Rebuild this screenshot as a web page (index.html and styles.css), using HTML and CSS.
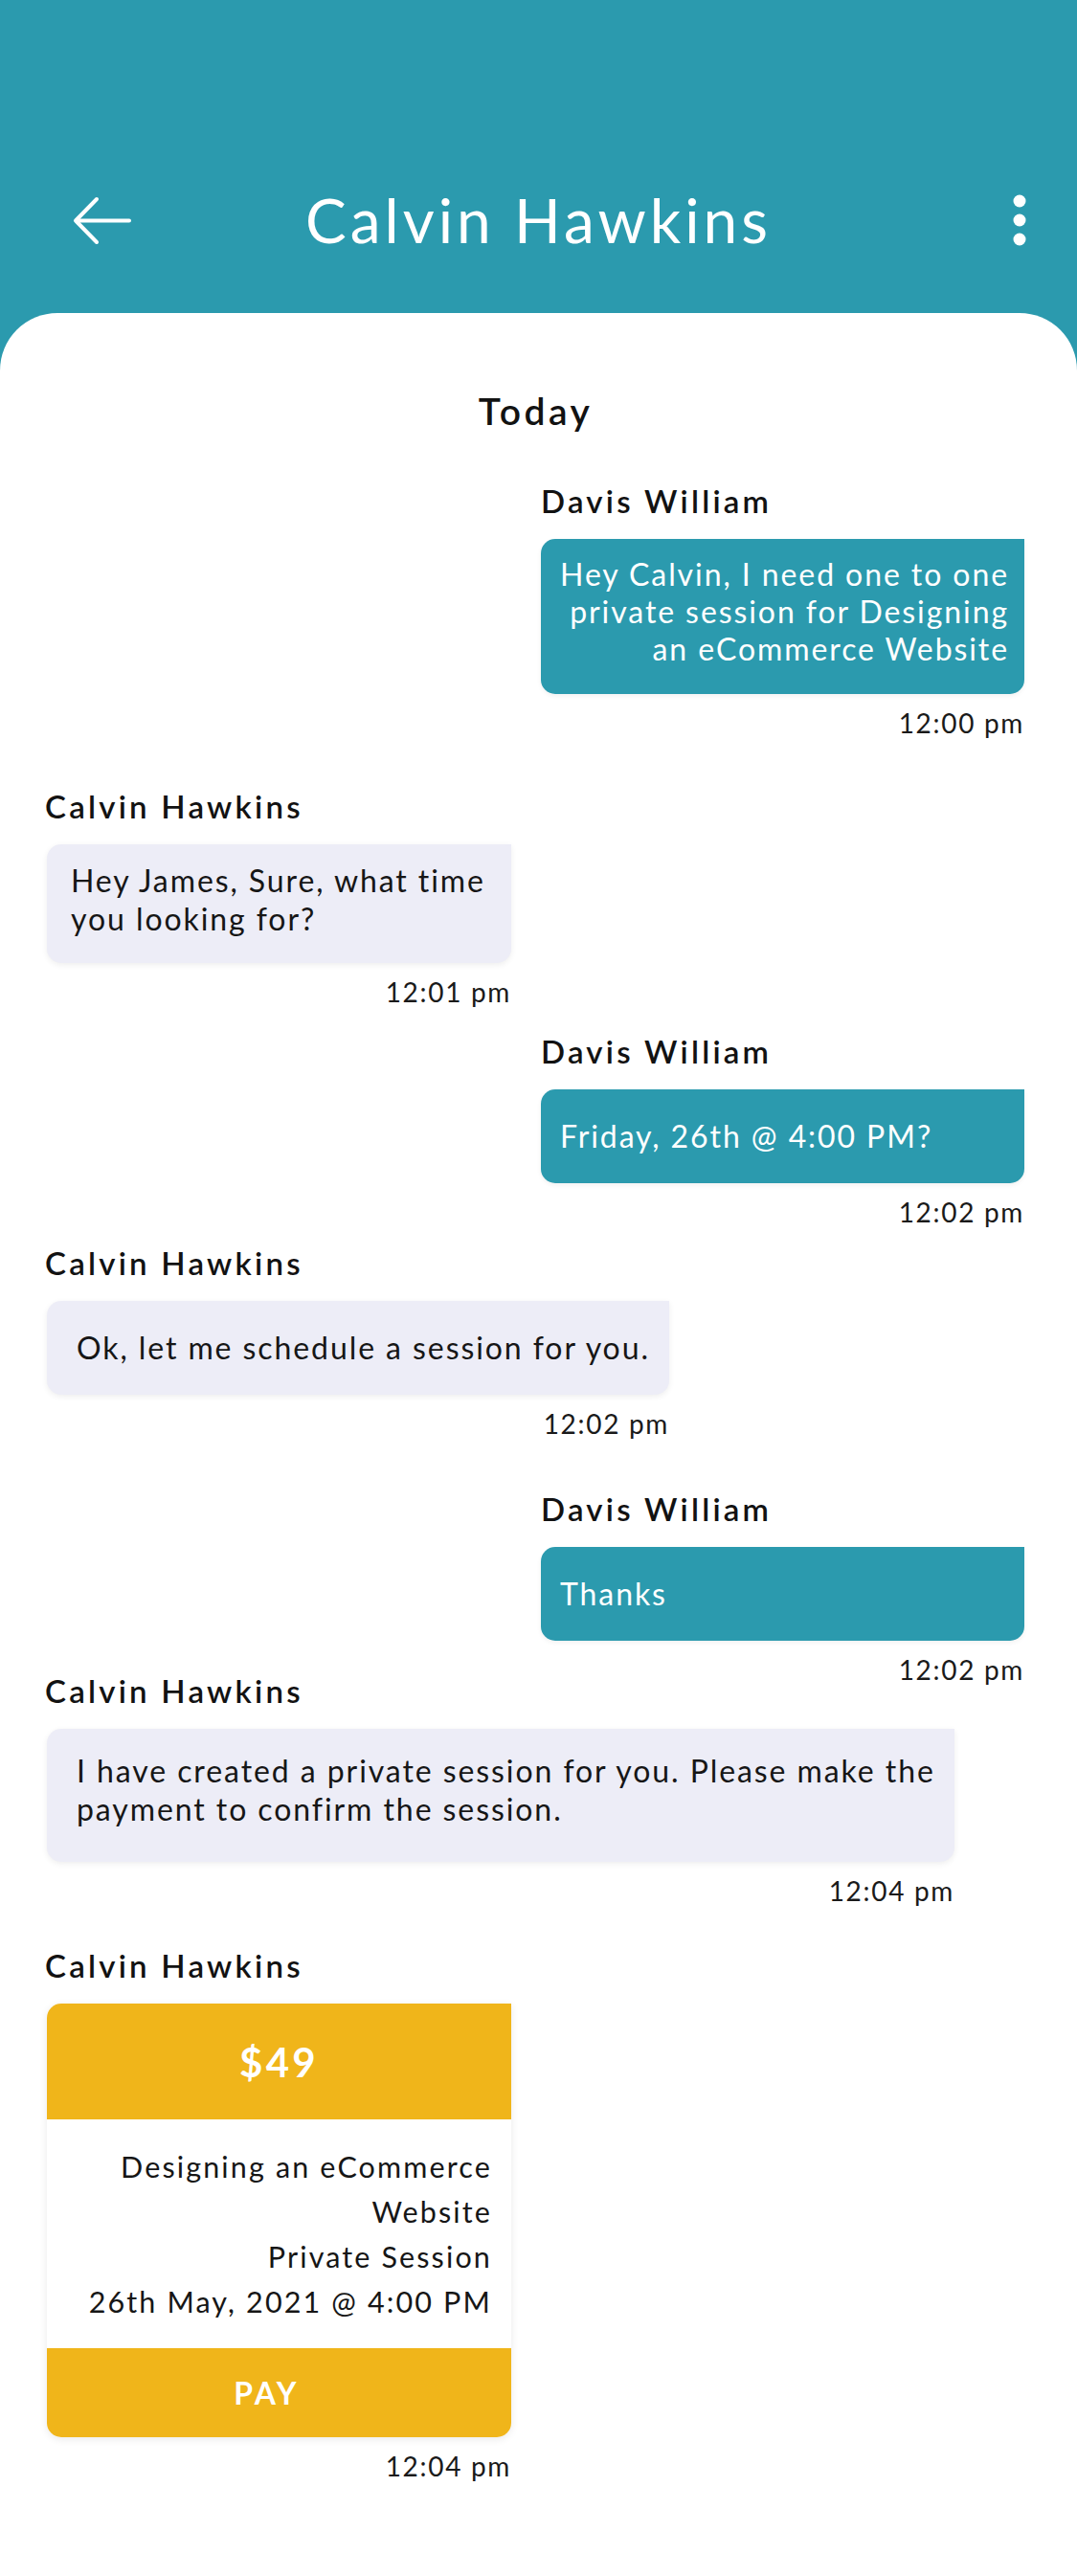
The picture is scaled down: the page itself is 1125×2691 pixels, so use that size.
FILE: index.html
```html
<!DOCTYPE html>
<html lang="en">
<head>
<meta charset="utf-8">
<title>Calvin Hawkins – Chat</title>
<link rel="stylesheet" href="styles.css">
</head>
<body>
<div class="screen">
  <header class="topbar">
    <svg class="topbar__back" width="62" height="51" viewBox="0 0 62 51" aria-label="Back">
      <path d="M3 25.5 L25 3 M3 25.5 L25 48 M3 25.5 H59" fill="none" stroke="#fff" stroke-width="4" stroke-linecap="round" stroke-linejoin="round"/>
    </svg>
    <h1 class="topbar__title">Calvin Hawkins</h1>
    <svg class="topbar__more" width="14" height="54" viewBox="0 0 14 54" aria-label="More">
      <circle cx="7" cy="7" r="6.5" fill="#fff"/>
      <circle cx="7" cy="27" r="6.5" fill="#fff"/>
      <circle cx="7" cy="47" r="6.5" fill="#fff"/>
    </svg>
  </header>

  <main class="chat">
    <div class="chat__day">Today</div>

    <div class="msg msg--out msg--g1">
      <div class="msg__name">Davis William</div>
      <div class="bubble bubble--out bubble--tall bubble--end">Hey Calvin, I need one to one<br>private session for Designing<br>an eCommerce Website</div>
      <div class="msg__time">12:00 pm</div>
    </div>

    <div class="msg msg--in msg--g2">
      <div class="msg__name">Calvin Hawkins</div>
      <div class="bubble bubble--in bubble--w485 bubble--in-a">Hey James, Sure, what time<br>you looking for?</div>
      <div class="msg__time">12:01 pm</div>
    </div>

    <div class="msg msg--out msg--g3">
      <div class="msg__name">Davis William</div>
      <div class="bubble bubble--out bubble--single">Friday, 26th @ 4:00 PM?</div>
      <div class="msg__time">12:02 pm</div>
    </div>

    <div class="msg msg--in msg--g4">
      <div class="msg__name">Calvin Hawkins</div>
      <div class="bubble bubble--in bubble--w650 bubble--in-b">Ok, let me schedule a session for you.</div>
      <div class="msg__time">12:02 pm</div>
    </div>

    <div class="msg msg--out msg--g5">
      <div class="msg__name">Davis William</div>
      <div class="bubble bubble--out bubble--single">Thanks</div>
      <div class="msg__time">12:02 pm</div>
    </div>

    <div class="msg msg--in msg--g6">
      <div class="msg__name">Calvin Hawkins</div>
      <div class="bubble bubble--in bubble--w948 bubble--in-c">I have created a private session for you. Please make the<br>payment to confirm the session.</div>
      <div class="msg__time">12:04 pm</div>
    </div>

    <div class="msg msg--in msg--g7">
      <div class="msg__name">Calvin Hawkins</div>
      <div class="paycard">
        <div class="paycard__price">$49</div>
        <div class="paycard__body">
          <div>Designing an eCommerce<br>Website</div>
          <div>Private Session</div>
          <div>26th May, 2021 @ 4:00 PM</div>
        </div>
        <div class="paycard__pay">PAY</div>
      </div>
      <div class="msg__time">12:04 pm</div>
    </div>
  </main>
</div>
</body>
</html>
```

FILE: styles.css
```css
* { box-sizing: border-box; }

html, body {
  margin: 0;
  padding: 0;
}

body {
  width: 1125px;
  font-family: Lato, "Open Sans", "Noto Sans", sans-serif;
  color: #121212;
  background: #2b9aae;
}

.screen {
  width: 1125px;
  min-height: 2691px;
  display: flex;
  flex-direction: column;
}

/* ---------- top bar ---------- */
.topbar {
  height: 327px;
  padding-top: 200px;
  display: grid;
  grid-template-columns: 1fr auto 1fr;
  align-items: start;
}

.topbar__back {
  justify-self: start;
  margin-left: 76px;
  margin-top: 5px;
}

.topbar__more {
  justify-self: end;
  margin-right: 53px;
  margin-top: 3px;
}

.topbar__title {
  margin: 0;
  font-size: 64px;
  line-height: 60px;
  font-weight: 400;
  letter-spacing: 0.062em;
  color: #fff;
  white-space: nowrap;
}

/* ---------- chat panel ---------- */
.chat {
  flex: 1;
  background: #fff;
  border-radius: 60px 60px 0 0;
  padding: 78px 55px 60px 49px;
  display: flex;
  flex-direction: column;
}

.chat__day {
  text-align: center;
  font-size: 39px;
  line-height: 48px;
  font-weight: 600;
  letter-spacing: 0.09em;
  margin-bottom: 54px;
}

.msg {
  display: flex;
  flex-direction: column;
}

.msg--out {
  align-self: flex-end;
  width: 505px;
}

.msg--in {
  align-self: flex-start;
}

.msg--g2 { margin-top: 54px; }
.msg--g3 { margin-top: 29px; }
.msg--g4 { margin-top: 20px; }
.msg--g5 { margin-top: 56px; }
.msg--g6 { margin-top: -11px; }
.msg--g7 { margin-top: 45px; }

.msg__name {
  font-size: 33px;
  line-height: 32px;
  font-weight: 600;
  letter-spacing: 0.098em;
  margin-bottom: 24px;
  white-space: nowrap;
}

.msg--in .msg__name { margin-left: -2px; }

.msg__time {
  margin-top: 13px;
  font-size: 28px;
  line-height: 34px;
  letter-spacing: 0.06em;
  text-align: right;
  color: #1a1a1a;
  white-space: nowrap;
}

/* ---------- bubbles ---------- */
.bubble {
  font-size: 32px;
  line-height: 40px;
  letter-spacing: 0.06em;
  white-space: nowrap;
  border-radius: 15px 0 15px 15px;
}

.bubble--out {
  background: #2b9aae;
  color: #fff;
  box-shadow: 0 2px 5px rgba(0, 0, 0, 0.06);
}

.bubble--tall {
  line-height: 39px;
  padding: 17px 16px 28px 20px;
}

.bubble--end { text-align: right; }

.bubble--single {
  padding: 29px 22px 29px 20px;
}

.bubble--in {
  background: #ededf7;
  color: #161616;
  box-shadow: 0 2px 6px rgba(0, 0, 0, 0.07);
}

.bubble--w485 { width: 485px; }
.bubble--w650 { width: 650px; }
.bubble--w948 { width: 948px; }

.bubble--in-a { padding: 18px 20px 26px 25px; }
.bubble--in-b { padding: 29px 20px 29px 31px; }
.bubble--in-c { padding: 24px 20px 35px 31px; }

/* ---------- pay card ---------- */
.paycard {
  width: 485px;
  border-radius: 15px 0 15px 15px;
  overflow: hidden;
  background: #fff;
  box-shadow: 0 2px 8px rgba(0, 0, 0, 0.09);
  display: flex;
  flex-direction: column;
}

.paycard__price {
  height: 121px;
  background: #f0b51a;
  color: #fff;
  font-size: 42px;
  font-weight: 700;
  letter-spacing: 0.08em;
  display: flex;
  align-items: center;
  justify-content: center;
}

.paycard__body {
  padding: 26px 20px 25px 16px;
  text-align: right;
  font-size: 30.5px;
  line-height: 47px;
  letter-spacing: 0.07em;
  color: #161616;
  white-space: nowrap;
}

.paycard__pay {
  height: 93px;
  background: #f0b51a;
  color: #fff;
  font-size: 32px;
  font-weight: 700;
  letter-spacing: 0.1em;
  display: flex;
  align-items: center;
  justify-content: center;
  padding-right: 26px;
}
```
